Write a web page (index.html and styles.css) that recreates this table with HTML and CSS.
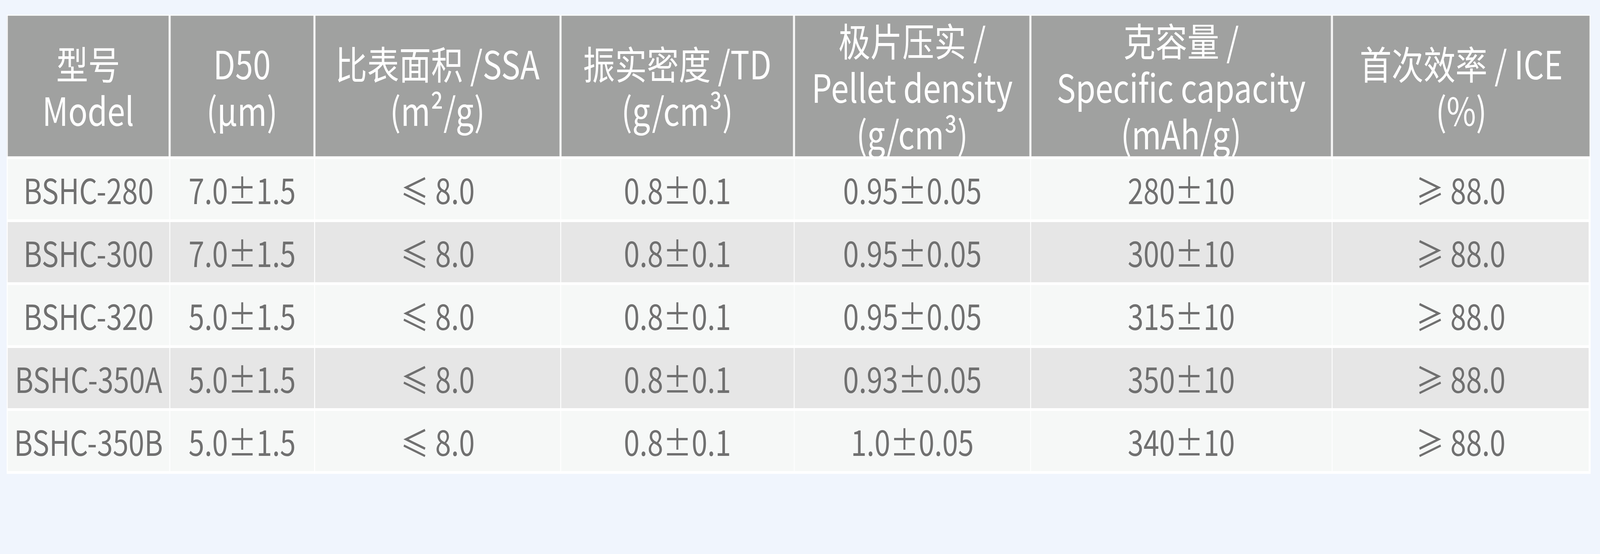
FILE: index.html
```html
<!DOCTYPE html>
<html lang="zh-CN">
<head>
<meta charset="utf-8">
<title>BSHC 规格表</title>
<link rel="stylesheet" href="styles.css">
</head>
<body>
<div class="frame">
  <div class="page">
    <div class="spec">
      <div class="row head">
        <div class="cell">型号<br>Model</div>
        <div class="cell">D50<br>(μm)</div>
        <div class="cell">比表面积 /SSA<br>(m²/g)</div>
        <div class="cell">振实密度 /TD<br>(g/cm³)</div>
        <div class="cell">极片压实 /<br>Pellet density<br>(g/cm³)</div>
        <div class="cell">克容量 /<br>Specific capacity<br>(mAh/g)</div>
        <div class="cell">首次效率 / ICE<br>(%)</div>
      </div>
      <div class="row body light">
        <div class="cell">BSHC-280</div>
        <div class="cell">7.0±1.5</div>
        <div class="cell">≤ 8.0</div>
        <div class="cell">0.8±0.1</div>
        <div class="cell">0.95±0.05</div>
        <div class="cell">280±10</div>
        <div class="cell">≥ 88.0</div>
      </div>
      <div class="row body dark">
        <div class="cell">BSHC-300</div>
        <div class="cell">7.0±1.5</div>
        <div class="cell">≤ 8.0</div>
        <div class="cell">0.8±0.1</div>
        <div class="cell">0.95±0.05</div>
        <div class="cell">300±10</div>
        <div class="cell">≥ 88.0</div>
      </div>
      <div class="row body light">
        <div class="cell">BSHC-320</div>
        <div class="cell">5.0±1.5</div>
        <div class="cell">≤ 8.0</div>
        <div class="cell">0.8±0.1</div>
        <div class="cell">0.95±0.05</div>
        <div class="cell">315±10</div>
        <div class="cell">≥ 88.0</div>
      </div>
      <div class="row body dark">
        <div class="cell">BSHC-350A</div>
        <div class="cell">5.0±1.5</div>
        <div class="cell">≤ 8.0</div>
        <div class="cell">0.8±0.1</div>
        <div class="cell">0.93±0.05</div>
        <div class="cell">350±10</div>
        <div class="cell">≥ 88.0</div>
      </div>
      <div class="row body light">
        <div class="cell">BSHC-350B</div>
        <div class="cell">5.0±1.5</div>
        <div class="cell">≤ 8.0</div>
        <div class="cell">0.8±0.1</div>
        <div class="cell">1.0±0.05</div>
        <div class="cell">340±10</div>
        <div class="cell">≥ 88.0</div>
      </div>
    </div>
  </div>
</div>
</body>
</html>
```
FILE: styles.css
```css
html, body {
  margin: 0;
  padding: 0;
  background: #f0f5fd;
  overflow: hidden;
}
body {
  font-family: "Noto Sans CJK SC", "Noto Sans", sans-serif;
}
.frame {
  width: 100vw;
  height: 100vh;
  overflow: hidden;
}
.page {
  width: 4961px;
  height: 1417px;
  padding: 38px 0 0 21px;
  box-sizing: border-box;
  background: #f0f5fd;
  transform: scaleX(0.8256);
  transform-origin: 0 0;
}
.spec {
  width: 4911px;
  background: #ffffff;
  padding: 2px 0 7px 0;
  display: flex;
  flex-direction: column;
  row-gap: 7px;
}
.row {
  display: grid;
  grid-template-columns: 505px 449px 763px 724px 733px 935px 802px;
}
.cell {
  display: flex;
  align-items: center;
  justify-content: center;
  text-align: center;
  box-sizing: border-box;
  white-space: nowrap;
}
.head {
  height: 360px;
}
.head .cell {
  background: #a0a1a0;
  box-shadow: inset 0 0 0 1px #b4b5b4;
  border-left: 3px solid #ffffff;
  border-right: 3px solid #ffffff;
  color: #ffffff;
  font-size: 99px;
  line-height: 119px;
  font-weight: 400;
}
.body {
  height: 154px;
}
.body .cell {
  border-left: 2px solid #ffffff;
  border-right: 1px solid #ffffff;
  color: #707070;
  font-size: 88px;
  line-height: 1;
  font-weight: 400;
}
.body .cell:first-child {
  border-left: 3px solid #ffffff;
}
.body .cell:last-child {
  border-right: 6px solid #ffffff;
}
.light .cell {
  background: #f6f8f7;
}
.dark .cell {
  background: #e6e6e6;
}
```
